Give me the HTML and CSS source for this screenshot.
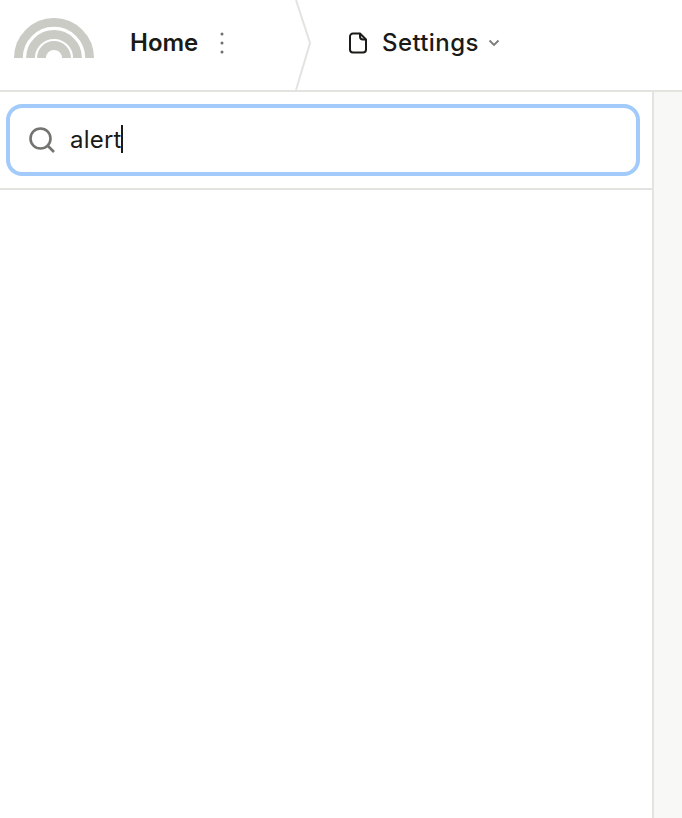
FILE: index.html
```html
<!DOCTYPE html>
<html lang="en">
<head>
  <meta charset="UTF-8" />
  <meta name="viewport" content="width=device-width, initial-scale=1.0"/>
  <title>Settings</title>
  <link rel="stylesheet" href="styles.css">
</head>
<body>

  <div class="header">
    <svg class="logo" width="80" height="40" viewBox="0 0 80 40">
      <path d="M4.4 40a35.6 35.6 0 0 1 71.2 0" />
      <path d="M16.5 40a23.5 23.5 0 0 1 47 0" />
      <path d="M27.5 40a12.5 12.5 0 0 1 25 0" />
    </svg>

    <div class="crumb-home">
      <span class="home-label">Home</span>
      <svg class="dots" width="4" height="22" viewBox="0 0 4 22">
        <circle cx="2" cy="2" r="1.5" />
        <circle cx="2" cy="11" r="1.5" />
        <circle cx="2" cy="20" r="1.5" />
      </svg>
    </div>

    <svg class="crumb-sep" width="16" height="90" viewBox="0 0 16 90">
      <polyline points="1,0 15,43 1,90" />
    </svg>

    <div class="crumb-page">
      <svg class="page-icon" width="20" height="22" viewBox="0 0 20 22">
        <path d="M12 1.5H5a3 3 0 0 0-3 3v13a3 3 0 0 0 3 3h10a3 3 0 0 0 3-3V7.5z" />
        <path d="M12 1.5v3a3 3 0 0 0 3 3h3" />
      </svg>
      <span class="page-label">Settings</span>
      <svg class="caret" width="12" height="8" viewBox="0 0 12 8">
        <polyline points="1.5,1.5 6,6 10.5,1.5" />
      </svg>
    </div>
  </div>

  <div class="content">
    <div class="panel">
      <div class="search-row">
        <div class="search-box">
          <svg class="search-icon" width="28" height="28" viewBox="0 0 28 28">
            <circle cx="12.5" cy="12.5" r="10" />
            <line x1="20" y1="20" x2="26" y2="26" />
          </svg>
          <span class="search-text">alert</span><span class="cursor"></span>
        </div>
      </div>
    </div>
    <div class="sidebar"></div>
  </div>

</body>
</html>
```

FILE: styles.css
```css
body {
  margin: 0;
  padding: 0;
  height: 818px;
  display: flex;
  flex-direction: column;
  font-family: "Inter", "Liberation Sans", sans-serif;
  background-color: #fff;
  color: #1a1a18;
  overflow: hidden;
}

.header {
  display: flex;
  align-items: center;
  height: 90px;
  flex-shrink: 0;
  border-bottom: 2px solid #e3e3e0;
}

.logo {
  margin: 0 0 14px 14px;
  flex-shrink: 0;
}

.logo path {
  fill: none;
  stroke: #cbcbc5;
  stroke-width: 8.8;
}

.crumb-home {
  display: flex;
  align-items: center;
  width: 165px;
  margin: 0 0 5px 36px;
}

.home-label {
  font-size: 24px;
  font-weight: 600;
}

.dots {
  margin-left: 22px;
}

.dots circle {
  fill: #6f6f6b;
}

.crumb-sep {
  flex-shrink: 0;
}

.crumb-sep polyline {
  fill: none;
  stroke: #e3e3e0;
  stroke-width: 2;
}

.crumb-page {
  display: flex;
  align-items: center;
  margin: 0 0 5px 37px;
}

.page-icon path {
  fill: none;
  stroke: #1a1a18;
  stroke-width: 2;
  stroke-linejoin: round;
}

.page-label {
  margin-left: 14px;
  font-size: 24px;
  font-weight: 500;
  letter-spacing: 0.4px;
}

.caret {
  margin-left: 9px;
}

.caret polyline {
  fill: none;
  stroke: #7c7c78;
  stroke-width: 1.8;
}

.content {
  flex: 1;
  display: flex;
}

.panel {
  width: 652px;
  flex-shrink: 0;
}

.search-row {
  height: 98px;
  padding: 12px 12px 0 6px;
  box-sizing: border-box;
  border-bottom: 2px solid #e3e3e0;
}

.search-box {
  display: flex;
  align-items: center;
  height: 72px;
  box-sizing: border-box;
  border: 4px solid #a2cafa;
  border-radius: 16px;
  padding-left: 18px;
}

.search-icon {
  flex-shrink: 0;
}

.search-icon circle,
.search-icon line {
  fill: none;
  stroke: #73736f;
  stroke-width: 2.6;
}

.search-text {
  margin: 0 0 2px 14px;
  font-size: 24px;
  letter-spacing: 0.2px;
}

.cursor {
  width: 2px;
  height: 28px;
  background-color: #1a1a18;
  margin: 0 0 2px -1px;
}

.sidebar {
  flex: 1;
  background-color: #f8f8f6;
  border-left: 2px solid #e3e3e0;
}
```
